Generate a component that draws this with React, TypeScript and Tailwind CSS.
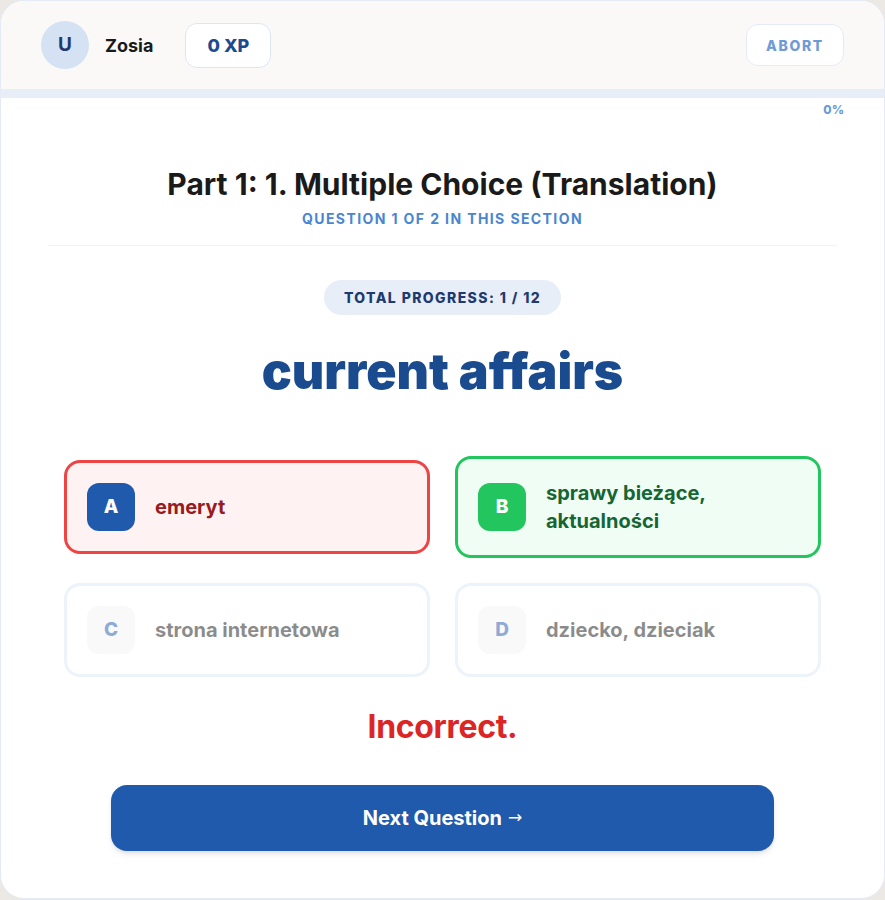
const options = [
  { key: 'A', text: 'emeryt', state: 'wrong' },
  { key: 'B', text: 'sprawy bieżące, aktualności', state: 'right' },
  { key: 'C', text: 'strona internetowa', state: 'idle' },
  { key: 'D', text: 'dziecko, dzieciak', state: 'idle' },
];

function Option({ letter, text, state }: { letter: string; text: string; state: string }) {
  const box =
    state === 'wrong'
      ? 'border-[#ef4444] bg-[#fef2f2]'
      : state === 'right'
        ? 'border-[#22c55e] bg-[#f0fdf4]'
        : 'border-[#dde8f7] bg-white opacity-50';
  const badge =
    state === 'wrong'
      ? 'bg-[#1f5aad] text-white'
      : state === 'right'
        ? 'bg-[#22c55e] text-white'
        : 'bg-[#f5f5f4] text-[#1f5aad]';
  const label =
    state === 'wrong' ? 'text-[#991b1b]' : state === 'right' ? 'text-[#166534]' : 'text-[#1a1a1a]';

  return (
    <div className={`flex items-center gap-5 rounded-2xl border-[3px] px-5 py-5 ${box}`}>
      <div className={`flex h-12 w-12 shrink-0 items-center justify-center rounded-xl text-[19px] font-extrabold ${badge}`}>
        {letter}
      </div>
      <span className={`text-[20px] font-bold leading-7 ${label}`}>{text}</span>
    </div>
  );
}

export default function App() {
  return (
    <div className="min-h-[900px] bg-[#ece9e5] font-['Inter',sans-serif]">
      <div className="h-[899px] overflow-hidden rounded-[24px] border border-[#e4ebf6] bg-white">
        <header className="flex items-center justify-between bg-[#fbf9f8] px-10 py-5">
          <div className="flex items-center">
            <div className="flex h-12 w-12 items-center justify-center rounded-full bg-[#d4e2f4] text-[19px] font-bold text-[#1e3a6e]">
              U
            </div>
            <span className="ml-4 text-[18px] font-bold text-[#1a1a1a]">Zosia</span>
            <div className="ml-8 flex h-[45px] w-[86px] items-center justify-center rounded-xl border border-[#dbe6f5] bg-white text-[18px] font-extrabold text-[#1e4b8f]">
              0 XP
            </div>
          </div>
          <button className="flex h-[42px] w-[98px] items-center justify-center rounded-xl border border-[#e4ebf6] bg-white text-[14px] font-extrabold tracking-[0.12em] text-[#6e9bd6]">
            ABORT
          </button>
        </header>

        <div className="h-[9px] bg-[#e8eef8]" />
        <div className="px-10 pt-[4px] text-right text-[12px] font-extrabold leading-4 text-[#6e9bd6]">0%</div>

        <div className="px-[47px] pt-[48px]">
          <div className="border-b border-[#f3f3f3] pb-[16px] text-center">
            <h1 className="text-[30px] font-bold leading-9 text-[#1a1a1a]">
              Part 1: 1. Multiple Choice (Translation)
            </h1>
            <p className="mt-[7px] text-[14px] font-bold leading-5 tracking-[0.1em] text-[#4a86d0]">
              QUESTION 1 OF 2 IN THIS SECTION
            </p>
          </div>

          <div className="flex flex-col items-center pt-[34px]">
            <div className="rounded-full bg-[#e8eef8] px-5 py-2 text-[14px] font-extrabold leading-[19px] tracking-[0.1em] text-[#1e3a6e]">
              TOTAL PROGRESS: 1 / 12
            </div>
            <h2 className="mt-[26px] text-[50px] font-black leading-[60px] text-[#1a4b8f]">current affairs</h2>
          </div>

          <div className="mt-[55px] grid grid-cols-2 items-center gap-[25px] px-4">
            {options.map((o) => (
              <Option key={o.key} letter={o.key} text={o.text} state={o.state} />
            ))}
          </div>

          <p className="mt-[30px] text-center text-[32px] font-bold leading-10 tracking-[-0.01em] text-[#dc2626]">Incorrect.</p>

          <button className="mx-auto mt-[38px] flex h-[66px] w-[663px] items-center justify-center gap-1.5 rounded-2xl bg-[#1f5aad] text-[20px] font-bold text-white shadow-md">
            Next Question
            <span className="font-['DejaVu_Sans',sans-serif] text-[17px] font-normal">→</span>
          </button>
        </div>
      </div>
    </div>
  );
}
